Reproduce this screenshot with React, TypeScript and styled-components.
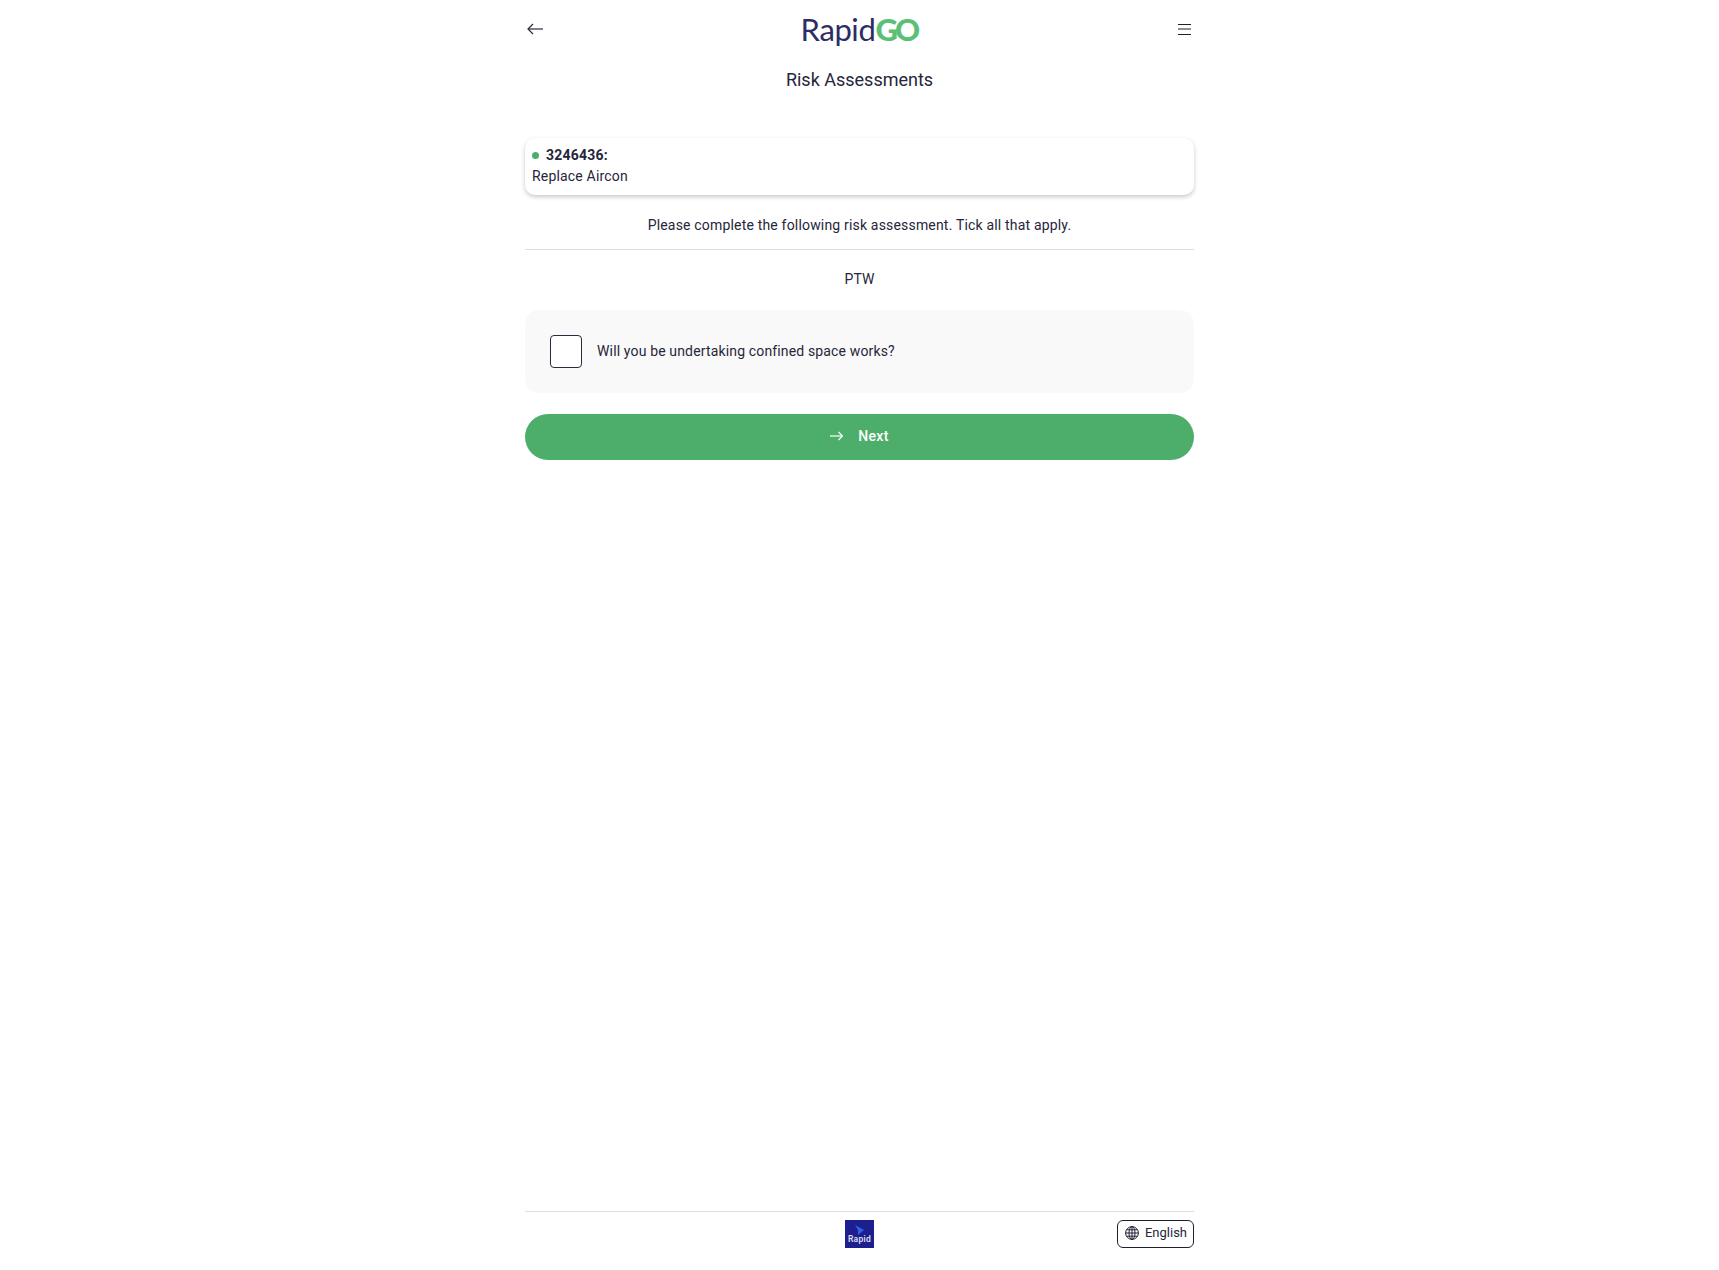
import styled, { createGlobalStyle } from "styled-components";

const GlobalStyle = createGlobalStyle`
  html, body {
    margin: 0;
    padding: 0;
    background: #fff;
    color: #26263a;
    font-family: Roboto, "Liberation Sans", sans-serif;
    font-size: 14px;
    letter-spacing: 0.18px;
  }
  * {
    box-sizing: border-box;
  }
`;

const Page = styled.div`
  display: flex;
  flex-direction: column;
  width: 669px;
  min-height: 100vh;
  margin: 0 auto;
`;

const Header = styled.header`
  display: grid;
  grid-template-columns: 1fr auto 1fr;
  align-items: center;
  height: 58px;
  padding: 0 3px 0 2px;
`;

const IconButton = styled.button<{ $end?: boolean }>`
  display: flex;
  align-items: center;
  justify-content: center;
  justify-self: ${(p) => (p.$end ? "end" : "start")};
  padding: 0;
  border: 0;
  background: none;
  color: #2a2a3c;
`;

const Logo = styled.div`
  display: flex;
  font-family: Lato, "Noto Sans", sans-serif;
  font-size: 31px;
  line-height: 58px;
  letter-spacing: -0.4px;
  color: #2d2d63;
`;

const LogoGo = styled.span`
  color: #5cbf74;
  font-weight: 900;
  letter-spacing: -2.8px;
`;

const Title = styled.h1`
  margin: 0;
  height: 80px;
  padding-top: 11px;
  font-size: 18px;
  font-weight: 400;
  line-height: 22px;
  letter-spacing: 0;
  text-align: center;
`;

const JobCard = styled.section`
  height: 57px;
  padding: 7px;
  border-radius: 10px;
  background: #fff;
  box-shadow: 0 2px 4px rgba(60, 60, 90, 0.28);
  line-height: 21px;
`;

const JobNumber = styled.div`
  display: flex;
  align-items: center;
  gap: 7px;
  font-weight: 700;
  letter-spacing: 0.2px;
`;

const StatusDot = styled.span`
  width: 7px;
  height: 7px;
  border-radius: 50%;
  background: #4dae6c;
`;

const Prompt = styled.p`
  margin: 0;
  padding: 20px 0 14px;
  border-bottom: 1px solid #dedede;
  line-height: 20px;
  text-align: center;
`;

const SectionName = styled.div`
  padding: 19px 0 21px;
  line-height: 20px;
  text-align: center;
`;

const Question = styled.label`
  display: flex;
  align-items: center;
  gap: 15px;
  height: 83px;
  padding: 0 25px;
  border-radius: 14px;
  background: #f9f9f9;
`;

const QuestionText = styled.span`
  padding-bottom: 2px;
  letter-spacing: 0.15px;
`;

const CheckBox = styled.span`
  width: 32px;
  height: 33px;
  border: 1.5px solid #2a2a3c;
  border-radius: 4px;
  background: #fff;
`;

const NextButton = styled.button`
  display: flex;
  align-items: center;
  justify-content: center;
  gap: 15px;
  width: 100%;
  height: 46px;
  margin-top: 21px;
  padding: 0 0 2px;
  border: 0;
  border-radius: 23px;
  background: #4dae6c;
  color: #fff;
  font-family: inherit;
  font-size: 14px;
  font-weight: 500;
  letter-spacing: 0.3px;
`;

const Footer = styled.footer`
  display: grid;
  grid-template-columns: 1fr auto 1fr;
  align-items: start;
  height: 59px;
  margin-top: auto;
  padding-top: 8px;
  border-top: 1px solid #dedede;
`;

const FooterMark = styled.div`
  display: flex;
  flex-direction: column;
  align-items: center;
  grid-column: 2;
  width: 29px;
  height: 28px;
  padding-top: 5px;
  background: #1e1f8f;
`;

const FooterMarkText = styled.span`
  color: #e6e6f5;
  font-size: 8.5px;
  font-weight: 500;
  line-height: 9px;
  letter-spacing: 0.3px;
`;

const LanguageButton = styled.button`
  display: flex;
  align-items: center;
  gap: 6px;
  justify-self: end;
  height: 28px;
  padding: 0 6px 3px 7px;
  border: 1px solid #1f1f2e;
  border-radius: 6px;
  background: #fff;
  color: #26263a;
  font-family: inherit;
  font-size: 13px;
  letter-spacing: 0;
`;

function BackArrow() {
  return (
    <svg width="16" height="12" viewBox="0 0 16 12" fill="none" stroke="currentColor" strokeWidth="1.2">
      <path d="M16 6H1" />
      <path d="M6 1L1 6l5 5" />
    </svg>
  );
}

function MenuLines() {
  return (
    <svg width="13" height="12" viewBox="0 0 13 12" fill="none" stroke="#1f1f2e" strokeWidth="1">
      <path d="M0 1.5h13M0 6h13M0 11.5h13" />
    </svg>
  );
}

function NextArrow() {
  return (
    <svg width="13" height="10" viewBox="0 0 13 10" fill="none" stroke="currentColor" strokeWidth="1.2">
      <path d="M0 5h12" />
      <path d="M8.5 1L12.5 5l-4 4" />
    </svg>
  );
}

function GlobeIcon() {
  return (
    <svg width="14" height="14" viewBox="0 0 14 14" fill="none" stroke="#1f1f2e" strokeWidth="1">
      <circle cx="7" cy="7" r="6.4" />
      <ellipse cx="7" cy="7" rx="3" ry="6.4" />
      <path d="M7 .6v12.8M.6 7h12.8M1.6 3.8h10.8M1.6 10.2h10.8" />
    </svg>
  );
}

export default function App() {
  return (
    <>
      <GlobalStyle />
      <Page>
        <Header>
          <IconButton>
            <BackArrow />
          </IconButton>
          <Logo>
            Rapid<LogoGo>GO</LogoGo>
          </Logo>
          <IconButton $end>
            <MenuLines />
          </IconButton>
        </Header>
        <Title>Risk Assessments</Title>
        <JobCard>
          <JobNumber>
            <StatusDot />
            3246436:
          </JobNumber>
          <div>Replace Aircon</div>
        </JobCard>
        <Prompt>Please complete the following risk assessment. Tick all that apply.</Prompt>
        <SectionName>PTW</SectionName>
        <Question>
          <CheckBox />
          <QuestionText>Will you be undertaking confined space works?</QuestionText>
        </Question>
        <NextButton>
          <NextArrow />
          Next
        </NextButton>
        <Footer>
          <FooterMark>
            <svg width="9" height="10" viewBox="0 0 9 10">
              <path d="M0 0 L9 5 L3 10 L3 5 Z" fill="#2f62e0" />
            </svg>
            <FooterMarkText>Rapid</FooterMarkText>
          </FooterMark>
          <LanguageButton>
            <GlobeIcon />
            English
          </LanguageButton>
        </Footer>
      </Page>
    </>
  );
}
